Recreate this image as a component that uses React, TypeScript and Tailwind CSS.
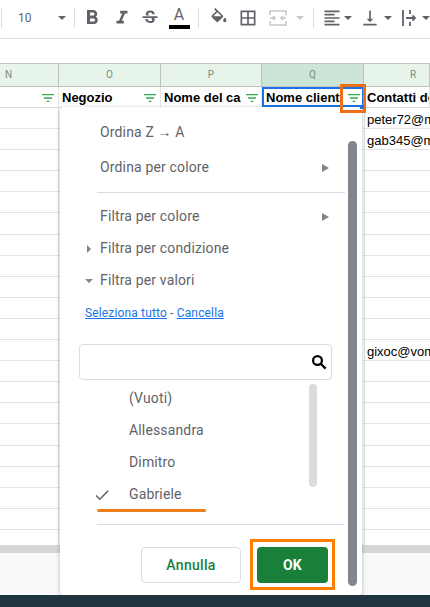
import {
  MdFormatBold,
  MdFormatItalic,
  MdStrikethroughS,
  MdBorderAll,
  MdFormatAlignLeft,
  MdVerticalAlignBottom,
  MdFilterList,
  MdCheck,
} from 'react-icons/md';
import type { ReactNode } from 'react';

const columns = [
  { letter: 'N', width: 'w-[59px]', title: '', letterClass: 'justify-start pl-[5px]', pad: 'pr-[2px]' },
  { letter: 'O', width: 'w-[102px]', title: 'Negozio', letterClass: 'justify-center', pad: 'pr-[2px]' },
  { letter: 'P', width: 'w-[101px]', title: 'Nome del ca', letterClass: 'justify-center', pad: 'pr-[1px]' },
  { letter: 'Q', width: 'w-[102px]', title: 'Nome client', letterClass: 'justify-center', pad: 'pr-0', active: true },
  { letter: 'R', width: 'flex-1', title: 'Contatti de', letterClass: 'justify-start pl-[46px]', pad: 'pr-0' },
];

const emails: Record<number, string> = { 0: 'peter72@m', 1: 'gab345@m', 11: 'gixoc@vom' };

function Caret({ className = '' }: { className?: string }) {
  return <span className={`h-0 w-0 border-x-[4px] border-t-[4px] border-x-transparent border-t-[#5f6368] ${className}`} />;
}

function FontColorIcon() {
  return (
    <div className="flex h-[24px] w-[24px] flex-col items-center">
      <span className="h-[17px] text-[16px] leading-[17px] text-[#5f6368]">A</span>
      <span className="mt-[2px] h-[4px] w-[21px] bg-black" />
    </div>
  );
}

function FillIcon() {
  return (
    <svg viewBox="0 0 24 24" className="h-[20px] w-[20px]" fill="#5f6368">
      <path d="M16.56 8.94L7.62 0 6.21 1.41l2.38 2.38-5.15 5.15c-.59.59-.59 1.54 0 2.12l5.5 5.5c.29.29.68.44 1.06.44s.77-.15 1.06-.44l5.5-5.5c.59-.58.59-1.53 0-2.12zM5.21 10L10 5.21 14.79 10H5.21zM19 11.5s-2 2.17-2 3.5c0 1.1.9 2 2 2s2-.9 2-2c0-1.33-2-3.5-2-3.5z" />
    </svg>
  );
}

function MergeIcon() {
  return (
    <svg viewBox="0 0 20 20" className="h-[20px] w-[20px]" fill="none" stroke="#c6c8cb" strokeWidth="1.6">
      <path d="M2 7V3h16v4M2 13v4h16v-4" />
      <path d="M2 10h5M5 8l2 2-2 2M18 10h-5M15 8l-2 2 2 2" />
    </svg>
  );
}

function OverflowIcon() {
  return (
    <svg viewBox="0 0 20 20" className="h-[20px] w-[20px]" fill="none" stroke="#5f6368" strokeWidth="1.8">
      <path d="M3 2v16" />
      <path d="M10 2v4M10 14v4" />
      <path d="M6 10h9M12.5 7.5L15 10l-2.5 2.5" />
    </svg>
  );
}

function SearchIcon() {
  return (
    <svg viewBox="0 0 16 16" className="h-[16px] w-[16px]" fill="none" stroke="#000" strokeWidth="2.2">
      <circle cx="6.5" cy="6.5" r="4.4" />
      <path d="M10 10l4.6 4.6" />
    </svg>
  );
}

function Toolbar() {
  return (
    <div className="flex h-[39px] items-center border-b border-[#dadce0] bg-white pb-[2px]">
      <span className="ml-[1px] h-[20px] w-px bg-[#dadce0]" />
      <span className="ml-[16px] w-[42px] text-[12px] text-[#5f6368]">10</span>
      <Caret />
      <span className="ml-[8px] h-[20px] w-px bg-[#dadce0]" />
      <div className="ml-[1px] flex items-center text-[#5f6368]">
        <span className="flex w-[30px] justify-center pl-[2px]"><MdFormatBold size={24} /></span>
        <span className="flex w-[28px] justify-center pl-[4px]"><MdFormatItalic size={22} /></span>
        <span className="flex w-[28px] justify-center pl-[4px]"><MdStrikethroughS size={20} /></span>
        <span className="flex w-[30px] justify-center pl-[4px]"><FontColorIcon /></span>
        <span className="ml-[6px] h-[20px] w-px bg-[#dadce0]" />
        <span className="ml-[6px] flex w-[28px] justify-center"><FillIcon /></span>
        <span className="flex w-[30px] justify-center"><MdBorderAll size={20} /></span>
        <span className="flex w-[30px] justify-center"><MergeIcon /></span>
        <Caret className="ml-[3px] border-t-[#c6c8cb]" />
        <span className="ml-[9px] h-[20px] w-px bg-[#dadce0]" />
        <span className="ml-[6px] flex w-[24px] justify-center"><MdFormatAlignLeft size={20} /></span>
        <Caret />
        <span className="ml-[6px] flex w-[24px] justify-center"><MdVerticalAlignBottom size={20} /></span>
        <Caret className="ml-[2px]" />
        <span className="ml-[6px] flex w-[24px] justify-center"><OverflowIcon /></span>
        <Caret />
      </div>
    </div>
  );
}

function ColumnHeaders() {
  return (
    <div className="flex h-[24px] border-y border-[#c0c0c0]">
      {columns.map((col) => (
        <div
          key={col.letter}
          className={`${col.width} ${col.letterClass} flex items-center border-r border-[#c0c0c0] pb-[2px] text-[10px] text-[#7b8a80] ${
            col.active ? 'bg-[#cce5d6]' : 'bg-[#e6f4ea]'
          }`}
        >
          {col.letter}
        </div>
      ))}
    </div>
  );
}

function HeaderRow() {
  return (
    <div className="flex h-[21px] border-b border-[#d8d9da] bg-white font-['Liberation_Sans',sans-serif] text-[13px] font-bold leading-[16px] text-black">
      {columns.map((col) => (
        <div
          key={col.letter}
          className={`${col.width} ${col.pad} relative flex items-center justify-between overflow-hidden whitespace-nowrap pt-[2px] ${
            col.active ? 'border-2 border-[#1a73e8] pl-[2px]' : 'border-r border-[#e2e3e3] pl-[3px]'
          }`}
        >
          <span>{col.title}</span>
          {col.letter !== 'R' && <MdFilterList size={16} className="shrink-0 text-[#34a853]" />}
        </div>
      ))}
    </div>
  );
}

function DataRows() {
  return (
    <div className="flex-1 overflow-hidden bg-white">
      {Array.from({ length: 21 }).map((_, i) => (
        <div key={i} className="flex h-[21.1px] border-b border-[#e2e3e3]">
          <div className="w-[59px] border-r border-[#e2e3e3]" />
          <div className="w-[102px] border-r border-[#e2e3e3]" />
          <div className="w-[101px] border-r border-[#e2e3e3]" />
          <div className="w-[103px] border-r border-[#e2e3e3]" />
          <div className="flex-1 overflow-hidden whitespace-nowrap pl-[2px] font-['Liberation_Sans',sans-serif] text-[13px] leading-[23px] text-black">
            {emails[i]}
          </div>
        </div>
      ))}
    </div>
  );
}

function MenuItem({ label, arrow, lead }: { label: ReactNode; arrow?: boolean; lead?: 'right' | 'down' }) {
  return (
    <div className="relative flex h-[17px] items-center justify-between pl-[40px] pr-[33px] text-[14px] leading-[17px] tracking-[0.15px] text-[#5f6368]">
      {lead === 'right' && <span className="absolute left-[27px] h-0 w-0 border-y-[4px] border-l-[4px] border-y-transparent border-l-[#80868b]" />}
      {lead === 'down' && <span className="absolute left-[25px] h-0 w-0 border-x-[4px] border-t-[4px] border-x-transparent border-t-[#80868b]" />}
      <span>{label}</span>
      {arrow && <span className="h-0 w-0 border-y-[4px] border-l-[7px] border-y-transparent border-l-[#80868b]" />}
    </div>
  );
}

function FilterMenu() {
  return (
    <div className="absolute left-[60px] top-[107px] h-[488px] w-[302px] rounded-[4px] bg-white font-['Roboto',sans-serif] shadow-[0_1px_4px_rgba(60,64,67,0.35)]">
      <div className="absolute right-[5px] top-[34px] h-[445px] w-[9px] rounded-full bg-[#80868b]" />
      <div className="flex flex-col pt-[17px]">
        <MenuItem
          label={
            <>
              Ordina Z <span className="font-['Liberation_Sans',sans-serif]">→</span> A
            </>
          }
        />
        <div className="mt-[18px]"><MenuItem label="Ordina per colore" arrow /></div>
        <div className="ml-[37px] mr-[17px] mt-[16px] h-px bg-[#dadce0]" />
        <div className="mt-[15px]"><MenuItem label="Filtra per colore" arrow /></div>
        <div className="mt-[15px]"><MenuItem label="Filtra per condizione" lead="right" /></div>
        <div className="mt-[15px]"><MenuItem label="Filtra per valori" lead="down" /></div>
        <div className="ml-[25px] mt-[17px] text-[12px] leading-[14px] tracking-[0.15px] text-[#5f6368]">
          <span className="text-[#1a73e8] underline">Seleziona tutto</span> - <span className="text-[#1a73e8] underline">Cancella</span>
        </div>
        <div className="ml-[19px] mt-[24px] flex h-[36px] w-[253px] items-center justify-end rounded-[4px] border border-[#dadce0] pr-[4px]">
          <SearchIcon />
        </div>
        <div className="relative mt-[4px] h-[140px] text-[14px] tracking-[0.15px] text-[#5f6368]">
          <div className="absolute left-[249px] top-0 h-[103px] w-[8px] rounded-full bg-[#dadce0]" />
          <div className="flex flex-col gap-[15px] pl-[69px] pt-[6px]">
            <span className="h-[17px] leading-[17px]">(Vuoti)</span>
            <span className="h-[17px] leading-[17px]">Allessandra</span>
            <span className="h-[17px] leading-[17px]">Dimitro</span>
            <span className="h-[17px] leading-[17px]">Gabriele</span>
          </div>
          <MdCheck size={18} className="absolute left-[33px] top-[102px] text-[#5f6368]" />
          <div className="absolute left-[37px] top-[125px] h-[3px] w-[109px] rounded-full bg-[#ed7d1a]" />
        </div>
        <div className="ml-[37px] mr-[18px] h-px bg-[#dadce0]" />
        <div className="ml-[81px] mt-[22px] flex gap-[16px]">
          <button className="h-[36px] w-[100px] rounded-[4px] border border-[#dadce0] bg-white text-[14px] font-medium tracking-[0.3px] text-[#188038]">Annulla</button>
          <button className="h-[36px] w-[71px] rounded-[4px] bg-[#188038] text-[14px] font-bold tracking-[0.3px] text-white">OK</button>
        </div>
      </div>
    </div>
  );
}

export default function App() {
  return (
    <div className="relative flex h-[607px] w-[430px] flex-col overflow-hidden bg-white font-['Roboto',sans-serif]">
      <Toolbar />
      <div className="h-[24px] bg-white" />
      <ColumnHeaders />
      <HeaderRow />
      <DataRows />
      <div className="h-[8px] bg-[#d5d6d7]" />
      <div className="h-[42px] bg-[#f8f9fa]" />
      <div className="h-[12px] bg-[#1f3540]" />

      <FilterMenu />

      {/* annotations drawn on top of the sheet */}
      <div className="absolute left-[340px] top-[84px] h-[29px] w-[26px] border-[3px] border-[#ed7014]" />
      <div className="absolute left-[360px] top-[105px] h-[4px] w-[4px] bg-[#1a73e8]" />
      <div className="absolute left-[250px] top-[539px] h-[51px] w-[85px] border-[3px] border-[#ff8000]" />
    </div>
  );
}
